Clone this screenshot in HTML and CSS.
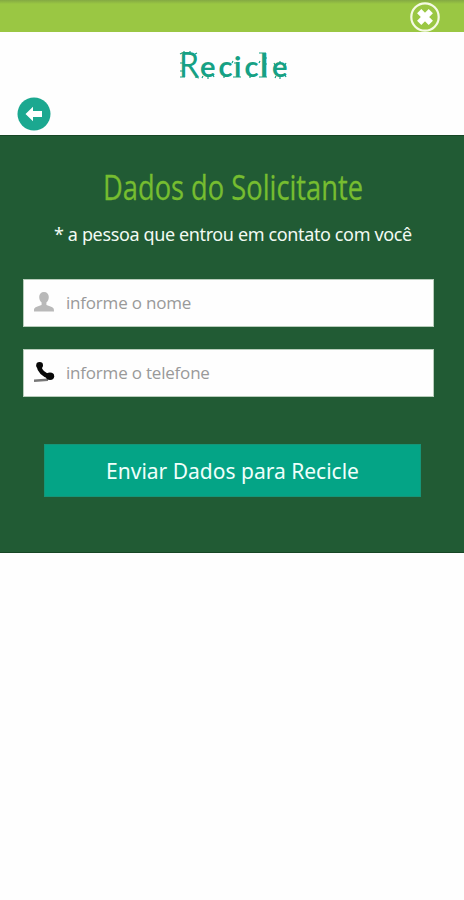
FILE: index.html
```html
<!DOCTYPE html>
<html lang="pt-br">
<head>
<meta charset="utf-8">
<title>Recicle</title>
<link rel="stylesheet" href="styles.css">
</head>
<body>

    <div class="topbar">
        <button class="close" type="button" aria-label="Fechar">
            <svg width="32" height="32" viewBox="0 0 32 32">
                <circle cx="16" cy="16" r="13.7" fill="none" stroke="#f5fae4" stroke-width="2.2"/>
                <path d="M10.2 10.2L21.8 21.8M21.8 10.2L10.2 21.8" stroke="#fff" stroke-width="6"/>
            </svg>
        </button>
    </div>

    <header class="header">
        <svg class="logo" width="120" height="50" viewBox="0 -5 120 50">
            <text class="logo-capital" x="4" y="31" textLength="20" lengthAdjust="spacingAndGlyphs">R</text>
            <text class="logo-letters" x="25 43.5 59 69.5" y="31">ecic</text>
            <text class="logo-tall" x="85" y="31">l</text>
            <text class="logo-letters" x="97" y="31">e</text>
            <!-- little spikes around the letters -->
            <path class="spikes" d="M5 8l2-1M9 5v3M15 5v2M20 8l2-1M5 17h3M5 25h3M5 31h5M20 31l4 1M28 30l-1 2M33 30v3M38 29l1 2M49 30v2M57 17l1-2M59 17h4M58 31h8M75 30v2M84 17l1-2M84 7h7M90 12h2M90 18h2M84 31h8M101 30l-1 2M105 30v3M110 29l1 2M100 19l-1-2M105 17v-2M110 19l1-2"/>
        </svg>
        <a class="back" href="#" aria-label="Voltar">
            <svg width="34" height="34" viewBox="0 0 34 34">
                <circle cx="17" cy="17" r="16.5" fill="#1ba890"/>
                <path d="M8.5 17L16 9.8V14H25V20H16V24.2Z" fill="#fff"/>
            </svg>
        </a>
    </header>

    <div class="panel">
        <h1 class="title">
            <svg width="264" height="54" viewBox="0 -5 264 54">
                <text x="1" y="32.5" textLength="260" lengthAdjust="spacingAndGlyphs">Dados do Solicitante</text>
            </svg>
        </h1>
        <p class="note">* a pessoa que entrou em contato com você</p>

        <form class="form">
            <div class="field">
                <svg width="22" height="22" viewBox="0 0 22 22">
                    <path d="M10 0C7 0 5.2 2 5.2 5C5.2 7.4 6.2 9.4 7.6 10.5V13C5 14 1.5 14.7.3 16.5Q-.2 17.5 0 19.5H20Q20 17.5 19.6 16.5C18.4 14.7 15 14 12.4 13V10.5C13.8 9.4 14.8 7.4 14.8 5C14.8 2 13 0 10 0Z" fill="#b9b9b9"/>
                </svg>
                <input type="text" id="nome" placeholder="informe o nome">
            </div>
            <div class="field">
                <svg width="22" height="22" viewBox="0 0 22 22">
                    <path d="M0 18.7L14 17.8" fill="none" stroke="#777" stroke-width="2.4"/>
                    <path d="M5 4C5.5 8.5 9.5 13 16 14.7" fill="none" stroke="#080808" stroke-width="4.8"/>
                    <ellipse cx="5.6" cy="3.3" rx="3.4" ry="3.3" fill="#080808"/>
                    <ellipse cx="16" cy="14.3" rx="4.2" ry="3.7" fill="#080808"/>
                </svg>
                <input type="text" id="telefone" placeholder="informe o telefone">
            </div>
            <button class="send" type="button">Enviar Dados para Recicle</button>
        </form>
    </div>

</body>
</html>
```
FILE: styles.css
```css
body {
    margin: 0;
    background-color: #fefefe;
    font-family: "Noto Sans", "Open Sans", sans-serif;
}

.topbar {
    display: flex;
    justify-content: flex-end;
    height: 32px;
    padding-right: 23px;
    box-sizing: border-box;
    background: linear-gradient(#84a943, #9ac743 4px, #9ac743);
}

.close {
    width: 32px;
    height: 32px;
    padding: 0;
    margin-top: 1px;
    border: none;
    background: none;
}

.header {
    display: flex;
    flex-direction: column;
    height: 103px;
}

.logo {
    margin: 9px 0 0 175px;
    font-family: "Lato", sans-serif;
    fill: #16a184;
}

.logo-capital {
    font-size: 34px;
}

.logo-letters {
    font-size: 29px;
    font-weight: bold;
}

.logo-tall {
    font-size: 33px;
    font-weight: bold;
}

.spikes {
    fill: none;
    stroke: #16a184;
    stroke-width: 1.2;
}

.back {
    width: 34px;
    height: 34px;
    margin: 6px 0 0 17px;
}

.panel {
    height: 418px;
    padding: 26px 30px 0 23px;
    box-sizing: border-box;
    background-color: #215b34;
    border-top: 1px solid #174625;
    border-bottom: 1px solid #174625;
}

.title {
    margin: 0 0 0 79px;
    height: 54px;
    font-family: "Open Sans", sans-serif;
    font-size: 34px;
    font-weight: normal;
    fill: #76bd30;
    stroke: #76bd30;
    stroke-width: 0.3px;
}

.title svg {
    display: block;
    overflow: visible;
}

.note {
    margin: 5px 0 0 31px;
    font-size: 18px;
    line-height: 26px;
    letter-spacing: -0.37px;
    color: #f2faf3;
    white-space: nowrap;
}

.form {
    margin-top: 32px;
}

.field {
    display: flex;
    align-items: center;
    height: 48px;
    margin-bottom: 22px;
    padding-left: 10px;
    box-sizing: border-box;
    border: 1px solid #b8cdbb;
    background-color: #fefefe;
}

.field input {
    flex: 1;
    min-width: 0;
    padding: 0 0 2px;
    margin-left: 10px;
    border: none;
    outline: none;
    background: none;
    font-family: "Open Sans", sans-serif;
    font-size: 17px;
    letter-spacing: -0.2px;
}

.field input::placeholder {
    color: #999;
}

.send {
    display: block;
    width: 377px;
    height: 53px;
    margin: 47px 0 0 21px;
    padding: 0;
    border: 1px solid #159578;
    background-color: #04a486;
    color: #effffb;
    font-family: "Noto Sans", sans-serif;
    font-size: 21px;
}
```
